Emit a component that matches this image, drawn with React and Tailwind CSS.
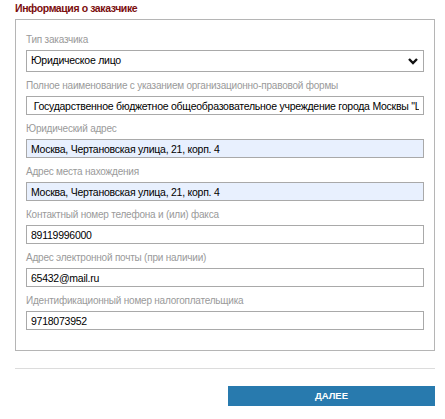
import React from "react";

const FONT = "font-['Liberation_Sans',Arial,sans-serif]";

function Label({ children }) {
  return <div className="text-[10px] leading-[15px] tracking-[-0.22px] text-[#9a9a9a] mb-[3px]">{children}</div>;
}

function Field({ label, value, filled }) {
  return (
    <div className="mt-[6px]">
      <Label>{label}</Label>
      <input
        readOnly
        value={value}
        className={`block w-full h-[19px] border border-[#a9a9a9] px-[4px] text-[10.5px] tracking-[-0.25px] text-black outline-none ${filled ? "bg-[#e8f0fe]" : "bg-white"}`}
      />
    </div>
  );
}

export default function App() {
  return (
    <div className={`${FONT} w-[445px] h-[419px] bg-white pl-[15px] pr-[10px] pt-[2px]`}>
      <h2 className="text-[10.5px] leading-[12px] font-bold tracking-[-0.4px] text-[#7b0d0d] h-[17px]">Информация о заказчике</h2>
      <div className="border border-[#b5b5b5] px-[10px] pt-[12px] pb-[20px]">
        <Label>Тип заказчика</Label>
        <div className="flex items-center justify-between h-[22px] border border-[#a9a9a9] bg-white pl-[4px] pr-[5px] text-[10.5px] tracking-[-0.25px] text-black">
          <span>Юридическое лицо</span>
          <svg width="10" height="8" viewBox="0 0 10 8">
            <path d="M1 2 L5 6 L9 2" fill="none" stroke="#111" strokeWidth="2.4" />
          </svg>
        </div>
        <Field
          label="Полное наименование с указанием организационно-правовой формы"
          value={' Государственное бюджетное общеобразовательное учреждение города Москвы "Центр образования"'}
        />
        <Field label="Юридический адрес" value="Москва, Чертановская улица, 21, корп. 4" filled />
        <Field label="Адрес места нахождения" value="Москва, Чертановская улица, 21, корп. 4" filled />
        <Field label="Контактный номер телефона и (или) факса" value="89119996000" />
        <Field label="Адрес электронной почты (при наличии)" value="65432@mail.ru" />
        <Field label="Идентификационный номер налогоплательщика" value="9718073952" />
      </div>
      <div className="mt-[17px] border-t border-[#dcdcdc]" />
      <div className="flex justify-end mt-[17px]">
        <button className="w-[207px] h-[20px] bg-[#287aae] text-white text-[9.5px] font-bold">ДАЛЕЕ</button>
      </div>
    </div>
  );
}
